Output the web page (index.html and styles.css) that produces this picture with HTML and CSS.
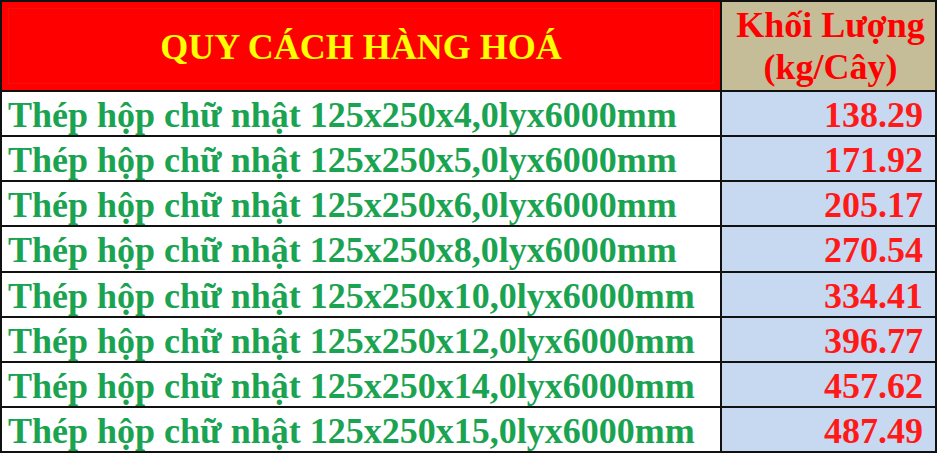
FILE: index.html
```html
<!DOCTYPE html>
<html lang="vi">
<head>
<meta charset="utf-8">
<title>Quy cách hàng hoá</title>
<link rel="stylesheet" href="styles.css">
</head>
<body>
<table class="spec">
  <thead>
    <tr>
      <th class="h-name"><div class="h-inner">QUY CÁCH HÀNG HOÁ</div></th>
      <th class="h-weight">Khối Lượng<br>(kg/Cây)</th>
    </tr>
  </thead>
  <tbody>
    <tr><td class="name">Thép hộp chữ nhật 125x250x4,0lyx6000mm</td><td class="val">138.29</td></tr>
    <tr><td class="name">Thép hộp chữ nhật 125x250x5,0lyx6000mm</td><td class="val">171.92</td></tr>
    <tr><td class="name">Thép hộp chữ nhật 125x250x6,0lyx6000mm</td><td class="val">205.17</td></tr>
    <tr><td class="name">Thép hộp chữ nhật 125x250x8,0lyx6000mm</td><td class="val">270.54</td></tr>
    <tr><td class="name">Thép hộp chữ nhật 125x250x10,0lyx6000mm</td><td class="val">334.41</td></tr>
    <tr><td class="name">Thép hộp chữ nhật 125x250x12,0lyx6000mm</td><td class="val">396.77</td></tr>
    <tr><td class="name">Thép hộp chữ nhật 125x250x14,0lyx6000mm</td><td class="val">457.62</td></tr>
    <tr><td class="name">Thép hộp chữ nhật 125x250x15,0lyx6000mm</td><td class="val">487.49</td></tr>
  </tbody>
</table>
</body>
</html>
```
FILE: styles.css
```css
html, body {
  margin: 0;
  padding: 0;
  background: #ffffff;
}
.spec {
  width: 937px;
  height: 453px;
  border-collapse: collapse;
  table-layout: fixed;
  font-family: "Liberation Serif", "Times New Roman", serif;
  font-weight: bold;
}
.spec th, .spec td {
  border: 2px solid #111111;
  padding: 0;
}
.h-name {
  width: 720px;
  height: 90px;
  background: #ff0000;
  padding: 6px !important;
  box-sizing: border-box;
}
.h-inner {
  height: 100%;
  border: 1px solid #f21010;
  display: flex;
  align-items: center;
  justify-content: center;
  color: #ffff00;
  font-size: 36px;
  padding-top: 2px;
  box-sizing: border-box;
}
.h-weight {
  background: #c4bd97;
  color: #ff0000;
  font-size: 36px;
  line-height: 42px;
  text-align: center;
  padding-left: 4px !important;
}
.spec tbody tr {
  height: 45px;
}
.name {
  color: #1aa351;
  font-size: 36px;
  line-height: 38px;
  text-align: left;
  padding-left: 6px !important;
  padding-top: 3px !important;
  white-space: nowrap;
}
.val {
  background: #c6d9f0;
  color: #ff1a1a;
  font-size: 36px;
  line-height: 38px;
  text-align: right;
  padding-right: 12px !important;
  padding-top: 3px !important;
}
```
